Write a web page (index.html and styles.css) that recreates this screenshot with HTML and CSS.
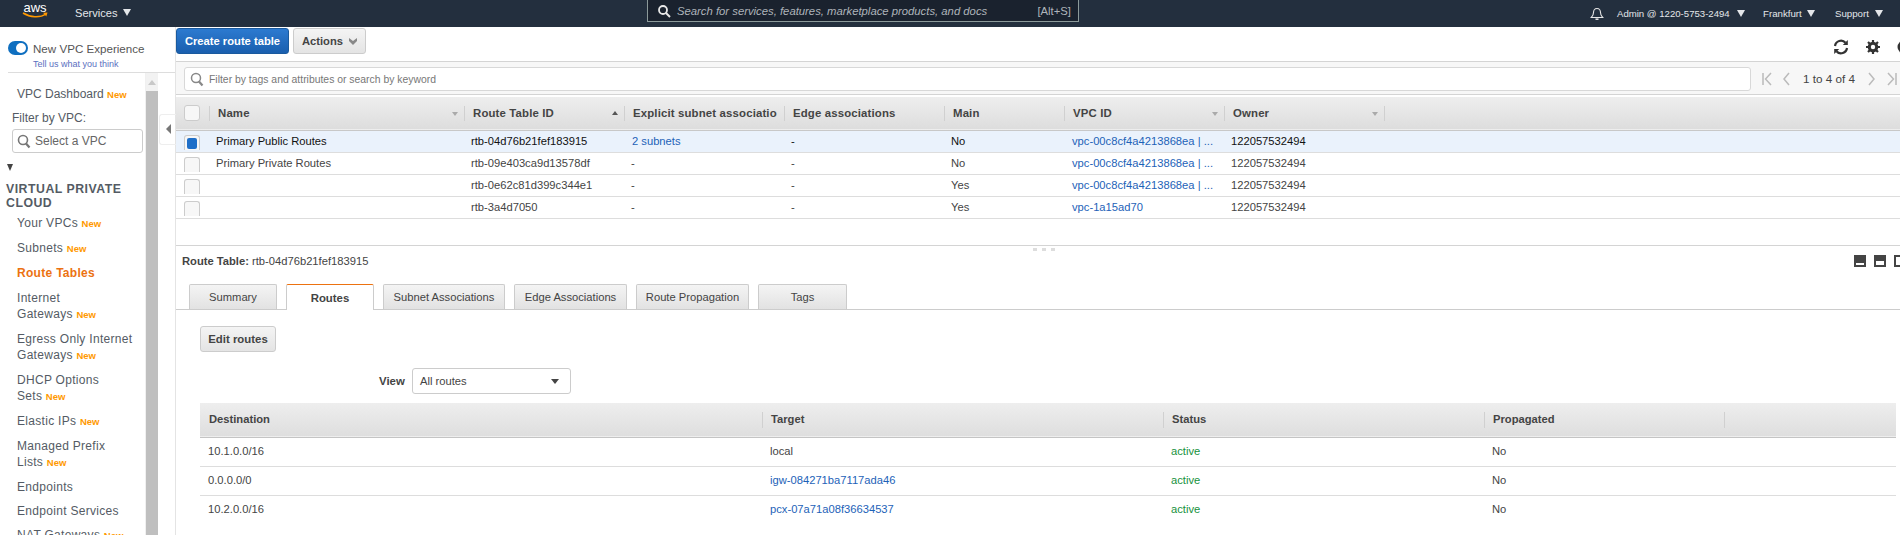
FILE: index.html
```html
<!DOCTYPE html>
<html>
<head>
<meta charset="utf-8" />
<title>Route Tables | VPC Management Console</title>
<link rel="stylesheet" href="styles.css">
</head>
<body>
<div class="topNav">
	<div class="awsLogo">
		<span class="awsText">aws</span>
		<svg class="awsSmile" width="27" height="7" viewBox="0 0 27 7"><path d="M1 1c7 4.500 17 5 23 1" fill="none" stroke="#f90" stroke-width="1.500"/><path d="M21 .8l4.500-.3-1.200 4z" fill="#f90"/></svg>
	</div>
	<div class="navItem services">Services <i class="navTri"></i></div>
	<div class="navSearch">
		<svg width="14" height="14" viewBox="0 0 14 14"><circle cx="6" cy="6" r="4" fill="none" stroke="#e8e8e8" stroke-width="1.800"/><path d="M9 9l4 4" stroke="#e8e8e8" stroke-width="2"/></svg>
		<span class="navSearchTxt">Search for services, features, marketplace products, and docs</span>
		<span class="navSearchKey">[Alt+S]</span>
	</div>
	<svg class="navBell" width="14" height="14" viewBox="0 0 14 14"><path d="M7 1.500c-2.500 0-3.500 2-3.500 4 0 2.500-.8 3.500-2.200 5h11.400c-1.400-1.500-2.200-2.500-2.200-5 0-2-1-4-3.500-4z" fill="none" stroke="#e6e6e6" stroke-width="1.100"/><path d="M5.500 12.200h3" stroke="#e6e6e6" stroke-width="1.500"/></svg>
	<div class="navItem admin">Admin @ 1220-5753-2494 <i class="navTri"></i></div>
	<div class="navItem frank">Frankfurt <i class="navTri"></i></div>
	<div class="navItem support">Support <i class="navTri"></i></div>
</div>

<div class="wrap">
	<div class="side">
		<div class="expBox">
			<div class="expTop"><span class="toggle"><i></i></span><span class="expTit">New VPC Experience</span></div>
			<a class="expLink">Tell us what you think</a>
		</div>
		<div class="sideBody">
			<div class="sideNav">
				<div class="sItem first">VPC Dashboard <b>New</b></div>
				<div class="filterLab">Filter by VPC:</div>
				<div class="filterSel">
					<svg width="14" height="15" viewBox="0 0 14 15"><circle cx="6" cy="6" r="4.500" fill="none" stroke="#777" stroke-width="1.600"/><path d="M9 9.500l3.500 4" stroke="#777" stroke-width="2.200"/></svg>
					Select a VPC
				</div>
				<i class="sideTri"></i>
				<div class="sideTit">VIRTUAL PRIVATE CLOUD</div>
				<div class="sItem">Your VPCs <b>New</b></div>
				<div class="sItem">Subnets <b>New</b></div>
				<div class="sItem on">Route Tables</div>
				<div class="sItem">Internet<br>Gateways <b>New</b></div>
				<div class="sItem">Egress Only Internet<br>Gateways <b>New</b></div>
				<div class="sItem">DHCP Options<br>Sets <b>New</b></div>
				<div class="sItem">Elastic IPs <b>New</b></div>
				<div class="sItem">Managed Prefix<br>Lists <b>New</b></div>
				<div class="sItem tight">Endpoints</div>
				<div class="sItem tight">Endpoint Services</div>
				<div class="sItem">NAT Gateways <b>New</b></div>
			</div>
			<div class="sideBar"><div class="sideBarUp"><i></i></div><div class="sideBarThumb"></div></div>
			<div class="sideGut"><div class="collapseBtn"><i></i></div></div>
		</div>
	</div>

	<div class="main">
		<div class="toolBar">
			<div class="btnBlue">Create route table</div>
			<div class="btnGray">Actions <svg width="8" height="7" viewBox="0 0 8 7"><path d="M0 0l4 3 4-3v3L4 7 0 3z" fill="#888"/></svg></div>
			<div class="toolIcons">
				<svg width="18" height="18" viewBox="0 0 18 18"><path d="M3 8a6 6 0 0 1 10.500-3.200" fill="none" stroke="#333" stroke-width="2.200"/><path d="M15.800 2v5h-5z" fill="#333"/><path d="M15 10a6 6 0 0 1-10.500 3.200" fill="none" stroke="#333" stroke-width="2.200"/><path d="M2.200 16v-5h5z" fill="#333"/></svg>
				<svg width="14" height="14" viewBox="0 0 14 14"><circle cx="7" cy="7" r="3.800" fill="none" stroke="#333" stroke-width="3"/><path d="M7 0v14M0 7h14M2 2l10 10M12 2L2 12" stroke="#333" stroke-width="2.200"/><circle cx="7" cy="7" r="2.200" fill="#fff"/></svg>
				<svg class="toolCut" width="14" height="14" viewBox="0 0 14 14"><circle cx="7" cy="7" r="6.500" fill="#333"/><rect x="6" y="6" width="2" height="5" fill="#fff"/><rect x="6" y="3" width="2" height="2" fill="#fff"/></svg>
			</div>
		</div>

		<div class="filterBar">
			<div class="filterBox">
				<svg width="14" height="15" viewBox="0 0 14 15"><circle cx="6" cy="6" r="4.500" fill="none" stroke="#888" stroke-width="1.500"/><path d="M9 9.500l3.500 4" stroke="#888" stroke-width="2.200"/></svg>
				Filter by tags and attributes or search by keyword
			</div>
			<div class="pager">
				<svg width="10" height="14" viewBox="0 0 10 14"><path d="M1 1v12M9 1L3.500 7 9 13" fill="none" stroke="#bbb" stroke-width="1.500"/></svg>
				<svg width="7" height="14" viewBox="0 0 7 14"><path d="M6 1L1 7l5 6" fill="none" stroke="#bbb" stroke-width="1.500"/></svg>
				<span>1 to 4 of 4</span>
				<svg width="7" height="14" viewBox="0 0 7 14"><path d="M1 1l5 6-5 6" fill="none" stroke="#bbb" stroke-width="1.500"/></svg>
				<svg width="10" height="14" viewBox="0 0 10 14"><path d="M9 1v12M1 1l5.500 6L1 13" fill="none" stroke="#bbb" stroke-width="1.500"/></svg>
			</div>
		</div>

		<div class="gridBox">
			<table class="grid">
				<colgroup>
					<col class="c1"><col class="c2"><col class="c3"><col class="c3"><col class="c3"><col class="c4"><col class="c3"><col class="c3"><col>
				</colgroup>
				<thead>
					<tr>
						<th class="chkCell"><span class="chk"></span></th>
						<th>Name<i class="sort"></i></th>
						<th>Route Table ID<i class="sort up"></i></th>
						<th><span class="cut">Explicit subnet association</span></th>
						<th>Edge associations</th>
						<th>Main</th>
						<th>VPC ID<i class="sort"></i></th>
						<th>Owner<i class="sort"></i></th>
						<th></th>
					</tr>
				</thead>
				<tbody>
					<tr class="sel">
						<td class="chkCell"><span class="chk"><i></i></span></td>
						<td>Primary Public Routes</td>
						<td>rtb-04d76b21fef183915</td>
						<td><a>2 subnets</a></td>
						<td>-</td>
						<td>No</td>
						<td><a>vpc-00c8cf4a4213868ea | ...</a></td>
						<td>122057532494</td>
						<td></td>
					</tr>
					<tr>
						<td class="chkCell"><span class="chk"></span></td>
						<td>Primary Private Routes</td>
						<td>rtb-09e403ca9d13578df</td>
						<td>-</td>
						<td>-</td>
						<td>No</td>
						<td><a>vpc-00c8cf4a4213868ea | ...</a></td>
						<td>122057532494</td>
						<td></td>
					</tr>
					<tr>
						<td class="chkCell"><span class="chk"></span></td>
						<td></td>
						<td>rtb-0e62c81d399c344e1</td>
						<td>-</td>
						<td>-</td>
						<td>Yes</td>
						<td><a>vpc-00c8cf4a4213868ea | ...</a></td>
						<td>122057532494</td>
						<td></td>
					</tr>
					<tr>
						<td class="chkCell"><span class="chk"></span></td>
						<td></td>
						<td>rtb-3a4d7050</td>
						<td>-</td>
						<td>-</td>
						<td>Yes</td>
						<td><a>vpc-1a15ad70</a></td>
						<td>122057532494</td>
						<td></td>
					</tr>
				</tbody>
			</table>
		</div>

		<div class="detail">
			<div class="dragDots"><i></i><i></i><i></i></div>
			<div class="detailHead">
				<div class="detailTit"><b>Route Table:</b> rtb-04d76b21fef183915</div>
				<div class="paneIcons">
					<i class="pane p1"></i><i class="pane p2"></i><i class="pane p3"></i>
				</div>
			</div>
			<div class="tabs">
				<div class="tab t1">Summary</div>
				<div class="tab t2 on">Routes</div>
				<div class="tab t3">Subnet Associations</div>
				<div class="tab t4">Edge Associations</div>
				<div class="tab t5">Route Propagation</div>
				<div class="tab t6">Tags</div>
			</div>
			<div class="tabBody">
				<div class="btnEdit">Edit routes</div>
				<div class="viewRow">
					<span class="viewLab">View</span>
					<div class="viewSel">All routes<i></i></div>
				</div>
				<table class="routes">
					<colgroup>
						<col class="r1"><col class="r2"><col class="r3"><col class="r4"><col>
					</colgroup>
					<thead>
						<tr><th>Destination</th><th>Target</th><th>Status</th><th>Propagated</th><th></th></tr>
					</thead>
					<tbody>
						<tr><td>10.1.0.0/16</td><td>local</td><td class="ok">active</td><td>No</td><td></td></tr>
						<tr><td>0.0.0.0/0</td><td><a>igw-084271ba7117ada46</a></td><td class="ok">active</td><td>No</td><td></td></tr>
						<tr><td>10.2.0.0/16</td><td><a>pcx-07a71a08f36634537</a></td><td class="ok">active</td><td>No</td><td></td></tr>
					</tbody>
				</table>
			</div>
		</div>
	</div>
</div>
</body>
</html>
```

FILE: styles.css
```css
*{ padding:0; margin:0; box-sizing:border-box;}
html,body{ height:535px; overflow:hidden;}
body{ font-family:"Liberation Sans",Arial,sans-serif; font-size:11.2px; color:#444; background:#FFF;}
a{ color:#1D62B8;}
i{ display:block;}

/* top nav */
.topNav{ height:27px; background:#232F3E; display:flex; align-items:center; color:#E4E7EA;}
.awsLogo{ width:26px; margin-left:22px; height:27px; position:relative; flex:none;}
.awsText{ display:block; font-size:13px; line-height:14px; color:#FFF; text-align:center; padding-top:1px;}
.awsSmile{ position:absolute; left:0; top:12px;}
.navItem{ display:flex; align-items:center; font-size:9.7px; white-space:pre; flex:none;}
.navTri{ width:0; height:0; border-left:4px solid transparent; border-right:4px solid transparent; border-top:7px solid #E4E7EA; margin-left:3px;}
.services{ margin-left:27px; font-size:11.1px; margin-top:-2px; width:83px;}
.services .navTri{ margin-left:2px;}
.navSearch{ width:432px; height:22px; margin-left:489px; align-self:flex-start; background:#1A222E; border:1px solid #8C9A9A; border-top:0; display:flex; align-items:center; padding:0 7px 0 9px; flex:none;}
.navSearchTxt{ margin-left:6px; font-style:italic; font-size:11.3px; color:#AEB4BA; flex:1;}
.navSearchKey{ font-size:11.3px; color:#AEB4BA;}
.navBell{ margin-left:511px; flex:none;}
.admin{ margin-left:13px; width:146px; font-size:9.6px;}
.admin .navTri{ margin-left:5px;}
.frank{ width:72px;}

.wrap{ display:flex; height:508px;}

/* left side */
.side{ width:176px; flex:none; display:flex; flex-direction:column; font-size:12px; color:#545B64; border-right:1px solid #E4E4E4;}
.expBox{ height:46px; margin-left:8px; border-bottom:1px solid #DDD; padding-top:13px;}
.expTop{ display:flex; align-items:center; height:16px;}
.toggle{ width:20px; height:14px; border-radius:7px; background:#0F6FC0; margin-right:5px; position:relative; flex:none;}
.toggle i{ width:10px; height:10px; border-radius:5px; background:#FFF; position:absolute; right:2px; top:2px;}
.expTit{ font-size:11.6px; color:#555;}
.expLink{ display:block; font-size:9px; color:#5A6FC0; margin:3px 0 0 25px;}
.sideBody{ flex:1; display:flex; min-height:0;}
.sideNav{ width:146px; flex:none; overflow:hidden; border-right:1px solid #F0F0F0; padding-top:13px;}
.sItem{ margin:0 0 9px 17px; line-height:16px; white-space:nowrap; letter-spacing:.3px;}
.sItem.tight{ margin-bottom:8px;}
.sItem b{ font-size:9.5px; line-height:0; color:#FF9900; font-weight:bold; letter-spacing:0;}
.sItem.on{ color:#EC7211; font-weight:bold;}
.sItem.first{ margin-bottom:0; letter-spacing:0;}
.filterLab{ margin:8px 0 0 12px; line-height:16px;}
.filterSel{ width:131px; height:24px; margin:3px 0 0 12px; border:1px solid #CCC; border-radius:3px; display:flex; align-items:center; gap:4px; padding-left:4px; color:#666;}
.sideTri{ width:0; height:0; border-left:3.500px solid transparent; border-right:3.500px solid transparent; border-top:7px solid #444; margin:11px 0 0 7px;}
.sideTit{ margin:11px 0 5px 6px; font-weight:bold; font-size:12.3px; line-height:14px; width:130px; letter-spacing:.5px; color:#545B64;}
.sideBar{ width:12px; flex:none; display:flex; flex-direction:column; background:#F2F2F2;}
.sideBarUp{ height:18px; padding:7px 0 0 2px;}
.sideBarUp i{ width:0; height:0; border-left:4px solid transparent; border-right:4px solid transparent; border-bottom:5px solid #C8C8C8;}
.sideBarThumb{ flex:1; background:#BFBFBF;}
.sideGut{ flex:1; padding-top:41px;}
.collapseBtn{ width:17px; height:31px; margin-left:1px; border:1px solid #EEE; border-right:0; border-radius:3px 0 0 3px; padding:9px 0 0 6px;}
.collapseBtn i{ width:0; height:0; border-top:5px solid transparent; border-bottom:5px solid transparent; border-right:5px solid #777;}

/* right side */
.main{ flex:1; min-width:0; display:flex; flex-direction:column; overflow:hidden;}
.toolBar{ height:34px; flex:none; display:flex; padding-top:1px;}
.btnBlue{ width:113px; height:26px; line-height:25px; text-align:center; font-weight:bold; font-size:11.2px; color:#FFF; background:linear-gradient(#2C7AD0,#1A5FAE); border:1px solid #1A5A9E; border-radius:3px;}
.btnGray{ width:73px; height:26px; margin-left:4px; display:flex; align-items:center; justify-content:center; gap:6px; font-weight:bold; font-size:11.2px; color:#444; background:linear-gradient(#F4F4F4,#E4E4E4); border:1px solid #CCC; border-radius:3px;}
.toolIcons{ margin-left:auto; display:flex; align-items:center; height:38px; width:68px; overflow:hidden; flex:none;}
.toolIcons svg{ flex:none;}
.toolIcons svg:nth-child(2){ margin-left:16px;}
.toolIcons .toolCut{ margin-left:17px;}
.filterBar{ height:34px; flex:none; display:flex; background:#F7F7F7; border-top:1px solid #D4D4D4; border-bottom:1px solid #D4D4D4; padding-top:5px;}
.filterBox{ width:1567px; height:24px; margin-left:8px; background:#FFF; border:1px solid #D8D8D8; border-radius:3px; display:flex; align-items:center; gap:5px; padding-left:5px; font-size:10.4px; color:#777; flex:none;}
.pager{ display:flex; align-items:flex-start; height:24px; padding:5px 0 0 11px; flex:none; font-size:11.7px; color:#444; white-space:nowrap;}
.pager svg{ flex:none;}
.pager svg:nth-child(2){ margin-left:11px;}
.pager span{ margin:0 13px; line-height:14px;}
.pager svg:nth-child(5){ margin-left:12px;}

.gridBox{ height:151px; flex:none; padding-top:2px; border-bottom:1px solid #D4D4D4; background:#FFF;}
.grid{ width:100%; table-layout:fixed; border-collapse:collapse;}
.c1{ width:33px;}
.c2{ width:255px;}
.c3{ width:160px;}
.c4{ width:120px;}
.grid thead tr{ height:33px; background:linear-gradient(#EEE,#DDD); border-bottom:1px solid #C8C8C8;}
.grid th{ text-align:left; font-weight:bold; font-size:11.4px; letter-spacing:.15px; color:#444; padding:0 0 1px 9px; position:relative; white-space:nowrap; overflow:hidden; background-image:linear-gradient(#D0D0D0,#D0D0D0); background-size:1px 15px; background-repeat:no-repeat; background-position:left center;}
.grid th:first-child{ background-image:none;}
.grid th:last-child{ padding:0;}
.cut{ display:block; width:144px; overflow:hidden;}
.sort{ position:absolute; right:6px; top:15px; width:0; height:0; border-left:3px solid transparent; border-right:3px solid transparent; border-top:4px solid #AAA;}
.sort.up{ border-top:0; border-bottom:4px solid #555; top:14px;}
.grid td{ height:22px; border-bottom:1px solid #DDD; padding-left:7px; white-space:nowrap; overflow:hidden; color:#444;}
.grid td a{ margin-left:1px;}
.grid tr.sel td{ background:#EAF2FC; color:#111;}
.grid tr.sel td a{ color:#1D62B8;}
.grid .chkCell{ padding-left:8px; background-image:none;}
.chk{ display:block; width:16px; height:16px; border:1px solid #CCC; border-radius:3px; background:#F7F7F7; padding:2px;}
.grid tbody .chk{ height:15px; border-bottom:0; border-radius:3px 3px 0 0; margin-top:2px;}
.chk i{ width:10px; height:11px; background:#1F6FC8; border-radius:2px;}

.detail{ flex:1; position:relative; min-height:0;}
.dragDots{ position:absolute; left:857px; top:2px; display:flex; gap:5px;}
.dragDots i{ width:4px; height:3px; background:#DDD;}
.detailHead{ height:38px; display:flex; padding:9px 0 0 6px;}
.detailTit{ font-size:11.2px; line-height:14px; margin-top:-1px;}
.detailTit b{ color:#444;}
.paneIcons{ margin-left:auto; display:flex; gap:8px; width:46px; flex:none;}
.pane{ width:12px; height:12px; background:#444; border-bottom:2px solid #444; position:relative; flex:none;}
.pane:after{ content:""; position:absolute; left:2px; right:2px; bottom:0; background:#FFF;}
.p1:after{ height:2px;}
.p2:after{ height:4px;}
.p3:after{ height:8px;}
.tabs{ height:26px; display:flex; gap:9px; padding-left:13px; border-bottom:1px solid #CCC; flex:none;}
.tab{ height:25px; text-align:center; line-height:24px; font-size:11.2px; color:#444; background:linear-gradient(#F4F4F4,#E2E2E2); border:1px solid #CCC; border-bottom:0; border-radius:2px 2px 0 0; flex:none;}
.t1{ width:88px;}
.t2{ width:88px;}
.t3{ width:122px;}
.t4{ width:113px;}
.t5{ width:113px;}
.t6{ width:89px;}
.tab.on{ background:#FFF; border-top:1px solid #EC7211; height:26px; line-height:26px; font-weight:bold; font-size:11.4px;}
.tabBody{ padding:16px 0 0 24px;}
.btnEdit{ width:76px; height:26px; line-height:25px; text-align:center; font-weight:bold; font-size:11.4px; color:#444; background:linear-gradient(#F4F4F4,#E4E4E4); border:1px solid #CCC; border-radius:3px;}
.viewRow{ display:flex; align-items:center; height:26px; margin:16px 0 0 179px;}
.viewLab{ width:33px; flex:none; font-weight:bold; font-size:11.4px; color:#444;}
.viewSel{ width:159px; height:26px; display:flex; align-items:center; justify-content:space-between; padding:0 11px 0 7px; border:1px solid #CCC; border-radius:3px; color:#444;}
.viewSel i{ width:0; height:0; border-left:4px solid transparent; border-right:4px solid transparent; border-top:5px solid #444;}
.routes{ width:1696px; table-layout:fixed; border-collapse:collapse; margin-top:9px;}
.r1{ width:562px;}
.r2{ width:401px;}
.r3{ width:321px;}
.r4{ width:240px;}
.routes thead tr{ height:34px; background:linear-gradient(#EEE,#DEDEDE); border-bottom:1px solid #C4C4C4;}
.routes th{ text-align:left; font-weight:bold; color:#444; padding:0 0 1px 9px; background-image:linear-gradient(#D0D0D0,#D0D0D0); background-size:1px 16px; background-repeat:no-repeat; background-position:left center;}
.routes th:first-child{ background-image:none;}
.routes td{ height:29px; border-bottom:1px solid #DDD; padding:0 0 1px 8px; color:#444;}
.routes tr:last-child td{ border-bottom:0;}
.routes .ok{ color:#16913C;}
```
